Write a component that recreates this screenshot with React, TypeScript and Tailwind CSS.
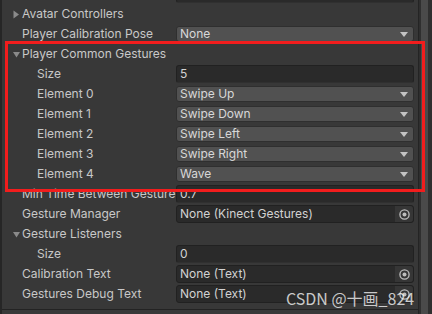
import React from 'react'

type Row =
  | { kind: 'text'; label: string; value: string; indent?: boolean }
  | { kind: 'drop'; label: string; value: string; indent?: boolean }
  | { kind: 'obj'; label: string; value: string }
  | { kind: 'fold'; label: string; open: boolean }

const rows: Row[] = [
  { kind: 'text', label: '', value: '' },
  { kind: 'fold', label: 'Avatar Controllers', open: false },
  { kind: 'drop', label: 'Player Calibration Pose', value: 'None' },
  { kind: 'fold', label: 'Player Common Gestures', open: true },
  { kind: 'text', label: 'Size', value: '5', indent: true },
  { kind: 'drop', label: 'Element 0', value: 'Swipe Up', indent: true },
  { kind: 'drop', label: 'Element 1', value: 'Swipe Down', indent: true },
  { kind: 'drop', label: 'Element 2', value: 'Swipe Left', indent: true },
  { kind: 'drop', label: 'Element 3', value: 'Swipe Right', indent: true },
  { kind: 'drop', label: 'Element 4', value: 'Wave', indent: true },
  { kind: 'text', label: 'Min Time Between Gesture', value: '0.7' },
  { kind: 'obj', label: 'Gesture Manager', value: 'None (Kinect Gestures)' },
  { kind: 'fold', label: 'Gesture Listeners', open: true },
  { kind: 'text', label: 'Size', value: '0', indent: true },
  { kind: 'obj', label: 'Calibration Text', value: 'None (Text)' },
  { kind: 'obj', label: 'Gestures Debug Text', value: 'None (Text)' },
]

function Arrow({ open }: { open: boolean }) {
  return (
    <svg width="9" height="9" viewBox="0 0 9 9" className="absolute left-[10px] top-[5px]">
      {open ? <path d="M1 2 L8 2 L4.5 7.5 Z" fill="#8a8a8a" /> : <path d="M1.5 0.5 L7 4.5 L1.5 8.5 Z" fill="#8a8a8a" />}
    </svg>
  )
}

function Picker() {
  return (
    <div className="flex h-full w-[18px] items-center justify-center rounded-r-[3px] bg-[#363636]">
      <svg width="11" height="11" viewBox="0 0 11 11">
        <circle cx="5.5" cy="5.5" r="4.6" fill="none" stroke="#bdbdbd" strokeWidth="1.3" />
        <circle cx="5.5" cy="5.5" r="2" fill="#bdbdbd" />
      </svg>
    </div>
  )
}

function Field({ row }: { row: Row }) {
  if (row.kind === 'drop') {
    return (
      <div className="flex h-[16px] w-[238px] items-center justify-between rounded-[3px] border border-[#2f2f2f] bg-[#515151] pl-[3px] pr-[5px] text-[#d8d8d8]">
        <span>{row.value}</span>
        <svg width="8" height="5" viewBox="0 0 8 5">
          <path d="M0 0 L8 0 L4 5 Z" fill="#c4c4c4" />
        </svg>
      </div>
    )
  }
  if (row.kind === 'text') {
    return (
      <div className="flex h-[18px] w-[238px] items-center rounded-[3px] border border-[#212121] border-b-[#303030] bg-[#2a2a2a] pl-[3px] text-[#d2d2d2]">
        {row.value}
      </div>
    )
  }
  if (row.kind === 'obj') {
    return (
      <div className="flex h-[18px] w-[238px] items-center justify-between rounded-[3px] border border-[#212121] bg-[#2a2a2a] pl-[3px] text-[#d2d2d2]">
        <span>{row.value}</span>
        <Picker />
      </div>
    )
  }
  return null
}

export default function App() {
  return (
    <div className="relative h-[314px] w-[432px] overflow-hidden bg-[#383838] text-[12px] text-[#c8c8c8] [font-family:Inter,'Noto_Sans',sans-serif]">
      <div className="flex h-full">
        <div className="w-[2px] bg-[#262626]" />
        <div className="flex flex-1 flex-col">
          <div className="-mt-[15px] flex flex-col">
            {rows.map((row, i) => (
              <div key={i} className="relative flex h-[20px] items-center pb-[2px]">
                {row.kind === 'fold' && <Arrow open={row.open} />}
                <div
                  className={`overflow-hidden whitespace-nowrap ${
                    'indent' in row && row.indent ? 'w-[174px] pl-[35px]' : 'w-[174px] pl-[20px]'
                  }`}
                >
                  {row.label}
                </div>
                <Field row={row} />
              </div>
            ))}
          </div>
          <div className="mt-[4px] flex-1 border-t border-[#232323] bg-[#393939]" />
        </div>
        <div className="flex w-[14px] border-l border-[#242424] bg-[#2f2f2f]">
          <div className="ml-[2px] h-full w-[7px] bg-[#4a4a4a]" />
        </div>
      </div>

      {/* highlight box */}
      <div className="absolute left-[5px] top-[41px] h-[151px] w-[420px] border-[3px] border-[#f21d1d]" />

      {/* watermark */}
      <div className="absolute left-[286px] top-[286px] text-[16px] text-white/75 [font-family:'Noto_Sans_CJK_SC',sans-serif]">
        CSDN @十画_824
      </div>
    </div>
  )
}
